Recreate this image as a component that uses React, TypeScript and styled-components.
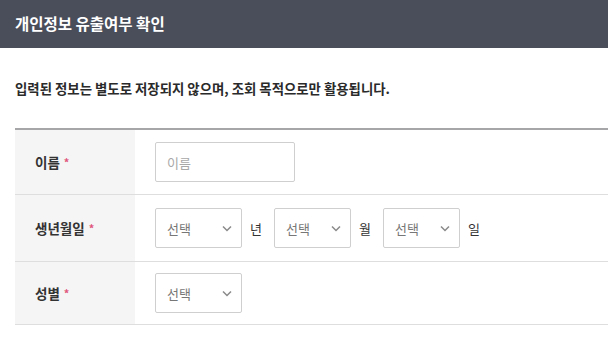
import React from "react";
import styled, { createGlobalStyle } from "styled-components";

const GlobalStyle = createGlobalStyle`
  html, body {
    margin: 0;
    padding: 0;
    background: #fff;
    font-family: "Noto Sans CJK KR", "Noto Sans", sans-serif;
  }
  * { box-sizing: border-box; }
`;

const Header = styled.header`
  height: 48px;
  background-color: #4a4e5b;
  display: flex;
  align-items: center;
  padding: 0 15px 2px;
  color: #fff;
  font-size: 15.5px;
  font-weight: 700;
`;

const Notice = styled.p`
  margin: 0;
  padding: 31px 15px 0;
  font-size: 13.4px;
  font-weight: 700;
  color: #2a2a2a;
  line-height: 19px;
`;

const Table = styled.div`
  margin: 30px 0 0 15px;
  border-top: 2px solid #a6a6a8;
`;

const Row = styled.div<{ $h: number }>`
  display: grid;
  grid-template-columns: 120px 1fr;
  height: ${(p) => p.$h}px;
  border-bottom: 1px solid #dedede;
`;

const Label = styled.div`
  background-color: #f5f5f5;
  display: flex;
  align-items: center;
  padding-left: 20px;
  font-size: 13.5px;
  font-weight: 700;
  color: #333;
`;

const Star = styled.span`
  color: #e0567c;
  margin-left: 4px;
  font-size: 11px;
`;

const Field = styled.div`
  display: flex;
  align-items: center;
  padding-left: 20px;
`;

const TextInput = styled.input`
  width: 140px;
  height: 40px;
  border: 1px solid #cfcfcf;
  border-radius: 2px;
  padding: 0 11px;
  font-family: inherit;
  font-size: 13px;
  outline: none;
  &::placeholder { color: #a8a8a8; }
`;

const Select = styled.div<{ $w: number }>`
  width: ${(p) => p.$w}px;
  height: 40px;
  border: 1px solid #cfcfcf;
  border-radius: 2px;
  display: flex;
  align-items: center;
  justify-content: space-between;
  padding: 0 9px 0 11px;
  font-size: 13px;
  color: #777;
`;

const Unit = styled.span`
  font-size: 13px;
  color: #333;
  margin: 0 12px 0 8px;
`;

const Chevron = () => (
  <svg width="10" height="7" viewBox="0 0 10 7">
    <path d="M1 1.5 L5 5.5 L9 1.5" fill="none" stroke="#8a8a8a" strokeWidth="1.5" />
  </svg>
);

const SelectBox = ({ w }: { w: number }) => (
  <Select $w={w}>
    <span>선택</span>
    <Chevron />
  </Select>
);

export default function App() {
  return (
    <>
      <GlobalStyle />
      <Header>개인정보 유출여부 확인</Header>
      <Notice>입력된 정보는 별도로 저장되지 않으며, 조회 목적으로만 활용됩니다.</Notice>
      <Table>
        <Row $h={65}>
          <Label>이름<Star>*</Star></Label>
          <Field>
            <TextInput placeholder="이름" />
          </Field>
        </Row>
        <Row $h={67}>
          <Label>생년월일<Star>*</Star></Label>
          <Field>
            <SelectBox w={87} />
            <Unit>년</Unit>
            <SelectBox w={77} />
            <Unit>월</Unit>
            <SelectBox w={77} />
            <Unit>일</Unit>
          </Field>
        </Row>
        <Row $h={63}>
          <Label>성별<Star>*</Star></Label>
          <Field>
            <SelectBox w={87} />
          </Field>
        </Row>
      </Table>
    </>
  );
}
